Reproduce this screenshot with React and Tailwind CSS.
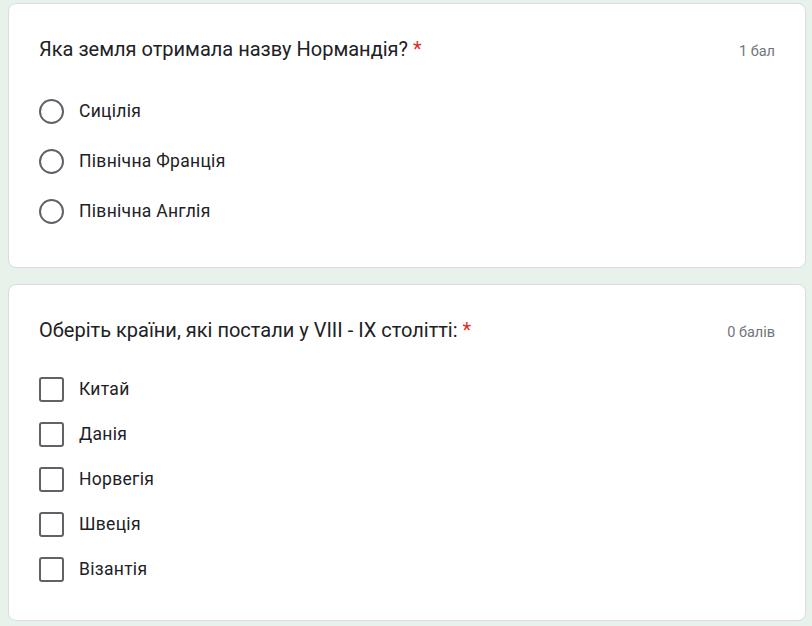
const font = { fontFamily: 'Roboto, "Noto Sans", Arial, sans-serif' }

function Question({ title, points, children, className }) {
  return (
    <div className={`ml-[8px] w-[798px] bg-white border border-[#dadce0] rounded-[8px] px-[30px] ${className}`}>
      <div className="flex items-baseline justify-between h-[30px]">
        <div className="text-[20px] leading-[30px] text-[#202124]">
          {title} <span className="text-[#d93025]">*</span>
        </div>
        <div className="text-[14.5px] text-[#70757a]">{points}</div>
      </div>
      {children}
    </div>
  )
}

export default function App() {
  const radios = ['Сицілія', 'Північна Франція', 'Північна Англія']
  const checks = ['Китай', 'Данія', 'Норвегія', 'Швеція', 'Візантія']

  return (
    <div className="min-h-screen bg-[#e7f3ea] pt-[3px] pb-[4px]" style={font}>
      <Question title="Яка земля отримала назву Нормандія?" points="1 бал" className="pt-[30px] pb-[31px]">
        <div className="mt-[22px] flex flex-col">
          {radios.map((r) => (
            <div key={r} className="flex items-center h-[50px] gap-[15px]">
              <span className="w-[25px] h-[25px] rounded-full border-[2.5px] border-[#5f6368] shrink-0" />
              <span className="text-[17.5px] text-[#202124] tracking-[0.3px]">{r}</span>
            </div>
          ))}
        </div>
      </Question>

      <Question title="Оберіть країни, які постали у VIII - IX столітті:" points="0 балів" className="mt-[16px] pt-[30px] pb-[28px]">
        <div className="mt-[22px] flex flex-col">
          {checks.map((c) => (
            <div key={c} className="flex items-center h-[45px] gap-[15px]">
              <span className="w-[25px] h-[25px] rounded-[3px] border-[2.5px] border-[#5f6368] shrink-0" />
              <span className="text-[17.5px] text-[#202124] tracking-[0.3px]">{c}</span>
            </div>
          ))}
        </div>
      </Question>
    </div>
  )
}
